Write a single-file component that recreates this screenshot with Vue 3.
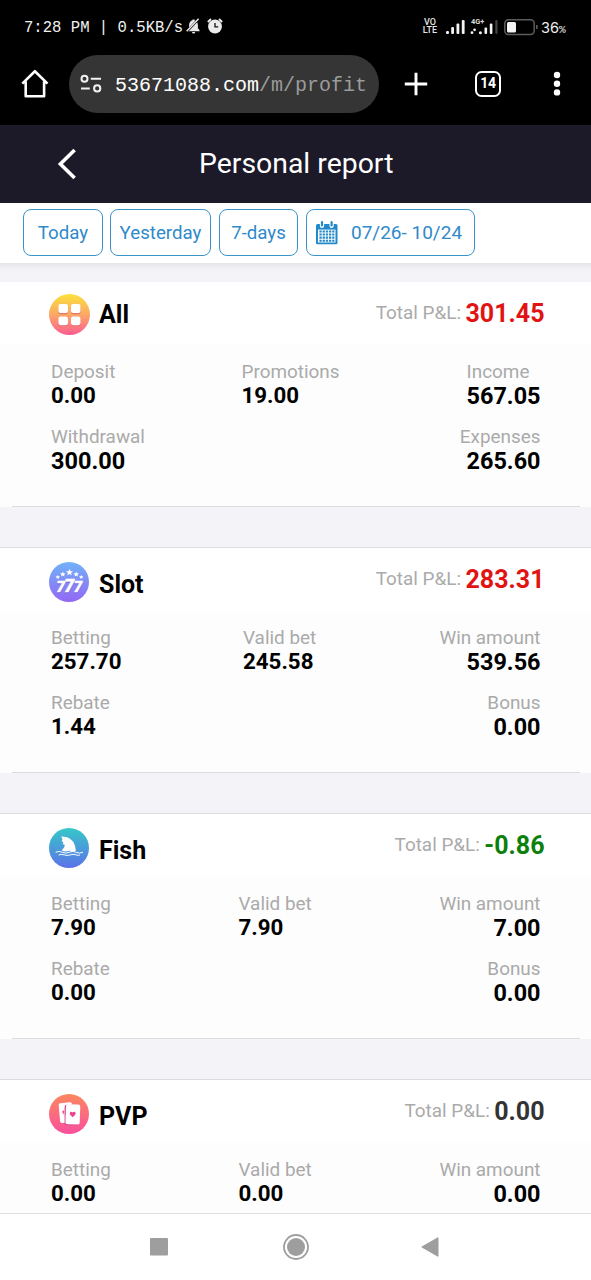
<script setup>
const sections = [
  {
    key: 'all', title: 'All', total: '301.45', tone: 'loss',
    left: [['Deposit', '0.00'], ['Withdrawal', '300.00']],
    middle: ['Promotions', '19.00'],
    right: [['Income', '567.05'], ['Expenses', '265.60']]
  },
  {
    key: 'slot', title: 'Slot', total: '283.31', tone: 'loss',
    left: [['Betting', '257.70'], ['Rebate', '1.44']],
    middle: ['Valid bet', '245.58'],
    right: [['Win amount', '539.56'], ['Bonus', '0.00']]
  },
  {
    key: 'fish', title: 'Fish', total: '-0.86', tone: 'gain',
    left: [['Betting', '7.90'], ['Rebate', '0.00']],
    middle: ['Valid bet', '7.90'],
    right: [['Win amount', '7.00'], ['Bonus', '0.00']]
  },
  {
    key: 'pvp', title: 'PVP', total: '0.00', tone: 'flat',
    left: [['Betting', '0.00']],
    middle: ['Valid bet', '0.00'],
    right: [['Win amount', '0.00']]
  }
]
const star = 'M0-3.5 1-1.1 3.5-1 1.6.6 2.2 3 0 1.7-2.2 3-1.6.6-3.5-1-1-1.1Z'
</script>

<template>
  <div class="screen">
    <div class="chrome">
      <div class="status">
        <span class="clock">7:28 PM | 0.5KB/s</span>
        <svg class="bell" width="15" height="17" viewBox="0 0 15 17">
          <path d="M1.5 13.2V12l1.6-1.7V7c0-2.5 1.4-4.3 3.4-4.8V1.4h2v.8c2 .5 3.4 2.3 3.4 4.8v3.3l1.6 1.7v1.2ZM6 14h3.2a1.6 1.6 0 0 1-3.2 0Z" fill="#e8e8e8" />
          <path d="M0 14.5 13.5 0" stroke="#000" stroke-width="2.4" />
          <path d="M.7 13.3 12.6.8" stroke="#e8e8e8" stroke-width="1.5" />
        </svg>
        <svg class="alarm" width="16" height="16" viewBox="0 0 16 16">
          <circle cx="8" cy="8.5" r="6.9" fill="#ececec" />
          <path d="M.8 4 4 1M15.2 4 12 1" stroke="#ececec" stroke-width="1.8" />
          <path d="M8 5v3.8h3.2" fill="none" stroke="#111" stroke-width="1.3" />
        </svg>
        <div class="volte"><span>VO</span><span>LTE</span></div>
        <svg class="signals" width="95" height="19" viewBox="0 0 95 19">
          <g fill="#f4f4f4">
            <rect x="0" y="13" width="3" height="3" rx="1.2" />
            <rect x="5.2" y="9" width="2.8" height="7" rx="1" />
            <rect x="10.5" y="5.5" width="2.8" height="10.5" rx="1" />
            <rect x="15.8" y="2" width="2.8" height="14" rx="1" />
            <circle cx="26" cy="14.7" r="1.4" /><circle cx="28.6" cy="11.8" r="1.4" />
            <circle cx="34.4" cy="14.7" r="1.5" />
            <rect x="38.5" y="9.4" width="2.6" height="6.6" rx="1" />
            <rect x="43.8" y="5.5" width="2.6" height="10.5" rx="1" />
            <rect x="61" y="4" width="9" height="10.5" rx="1.5" />
          </g>
          <rect x="49.3" y="2" width="2.2" height="14" rx="1" fill="#444" />
          <text x="25" y="5.8" class="net">4G+</text>
          <rect x="58.8" y="1.8" width="29.4" height="14.6" rx="3.6" fill="none" stroke="#5c5c5c" stroke-width="1.5" />
          <path d="M90.8 7v4" stroke="#5c5c5c" stroke-width="1.6" />
        </svg>
        <span class="level">36<small>%</small></span>
      </div>
      <div class="toolbar">
        <svg class="home" width="28" height="30" viewBox="0 0 28 30">
          <path d="M1.3 14.6 13.9 2.2 26.5 14.6M4.7 12.6V27.2H23.1V12.6" fill="none" stroke="#fff" stroke-width="2.6" stroke-linejoin="round" />
        </svg>
        <div class="address">
          <svg width="22" height="20" viewBox="0 0 22 20" fill="none" stroke="#f2f2f2" stroke-width="2">
            <circle cx="4.5" cy="4.7" r="3" /><path d="M10.8 4.7H21M1 14.4h8.8" /><circle cx="17.2" cy="14.4" r="3.1" />
          </svg>
          <span class="url">53671088.com<i>/m/profit</i></span>
        </div>
        <svg class="plus" width="24" height="24" viewBox="0 0 24 24"><path d="M12 .8V23.2M.8 12H23.2" stroke="#fff" stroke-width="2.9" /></svg>
        <div class="tabs">14</div>
        <svg class="more" width="8" height="26" viewBox="0 0 8 26" fill="#fff"><circle cx="4" cy="4" r="3.2" /><circle cx="4" cy="12.7" r="3.2" /><circle cx="4" cy="21.4" r="3.2" /></svg>
      </div>
    </div>

    <header class="titlebar">
      <svg width="20" height="32" viewBox="0 0 20 32"><path d="M18.6 2 4.4 16 18.6 30" fill="none" stroke="#fff" stroke-width="3.6" /></svg>
      <h1>Personal report</h1>
    </header>

    <nav class="filters">
      <button class="today">Today</button>
      <button class="yesterday">Yesterday</button>
      <button class="week">7-days</button>
      <button class="range">
        <svg width="22" height="24" viewBox="0 0 22 24">
          <path d="M0 4.5Q0 3 1.5 3H20Q21.5 3 21.5 4.5V22Q21.5 23.3 20 23.3H1.5Q0 23.3 0 22Z" fill="#2389cb" />
          <path d="M2 8.6H19.5V21.5H2Z" fill="#fff" />
          <path d="M3.4 10.5H18.4M3.4 13.5H18.4M3.4 16.6H18.4M3.4 19.7H18.4" stroke="#2389cb" stroke-width="2.1" stroke-dasharray="2.3 .9" />
          <path d="M6 1.2V5M15.6 1.2V5" stroke="#fff" stroke-width="4.2" stroke-linecap="round" />
          <path d="M6 1.2V4.4M15.6 1.2V4.4" stroke="#2389cb" stroke-width="2.2" stroke-linecap="round" />
        </svg>
        <span>07/26- 10/24</span>
      </button>
    </nav>

    <main class="report">
      <section v-for="s in sections" :key="s.key" class="record" :class="s.key">
        <div class="head">
          <svg class="badge" viewBox="0 0 40 40">
            <defs>
              <linearGradient id="g-all" x2="0" y2="1"><stop offset="0" stop-color="#fce13a" /><stop offset=".5" stop-color="#fba866" /><stop offset="1" stop-color="#fb5c91" /></linearGradient>
              <linearGradient id="g-slot" x2="0" y2="1"><stop offset="0" stop-color="#70b2f8" /><stop offset="1" stop-color="#9368f5" /></linearGradient>
              <linearGradient id="g-fish" x2="0" y2="1"><stop offset="0" stop-color="#36c8c8" /><stop offset="1" stop-color="#5c72e9" /></linearGradient>
              <linearGradient id="g-pvp" x2="0" y2="1"><stop offset="0" stop-color="#fc875f" /><stop offset="1" stop-color="#fa509e" /></linearGradient>
            </defs>
            <circle cx="20" cy="20" r="20" :fill="`url(#g-${s.key})`" />
            <template v-if="s.key === 'all'">
              <g fill="#d65f69" opacity=".65"><rect x="9.2" y="11" width="9.3" height="8.8" rx="2" /><rect x="21.4" y="11" width="9.3" height="8.8" rx="2" /><rect x="9.2" y="23" width="9.3" height="8.4" rx="2" /><rect x="21.4" y="23" width="9.3" height="8.4" rx="2" /></g>
              <g fill="#fff"><rect x="9.2" y="9.8" width="9.3" height="8.8" rx="2" /><rect x="21.4" y="9.8" width="9.3" height="8.8" rx="2" /><rect x="9.2" y="22" width="9.3" height="8.4" rx="2" /><rect x="21.4" y="22" width="9.3" height="8.4" rx="2" /></g>
            </template>
            <template v-else-if="s.key === 'slot'">
              <g fill="#fff">
                <path :d="star" transform="translate(20.5 10.3)" />
                <path :d="star" transform="translate(13.8 12.2) scale(.8)" />
                <path :d="star" transform="translate(27.2 12.2) scale(.8)" />
                <path :d="star" transform="translate(8.8 15) scale(.65)" />
                <path :d="star" transform="translate(32.2 15) scale(.65)" />
              </g>
              <g class="sevens shade"><text x="11.8" y="30.8">7</text><text x="20.2" y="31.4" class="big">7</text><text x="29" y="30.8">7</text></g>
              <g class="sevens"><text x="11.8" y="29.8">7</text><text x="29" y="29.8">7</text><text x="20.2" y="30.4" class="big">7</text></g>
            </template>
            <template v-else-if="s.key === 'fish'">
              <path d="M12.2 8.6C19.5 8.4 26.2 12 26.8 22.8Q23.6 24.4 20.3 22.7 16.2 24.5 12.6 22.3C15.1 20.3 16 18.4 15.5 16.5L13.7 16.2 14.4 14.2 12.7 13.2 13.5 11.3Z" fill="#fff" />
              <path d="M6.6 24.3Q10 22.6 13.4 24.3T20.3 24.3 27.1 24.3 34 24.2M9.7 27Q12.2 25.8 15.2 26.9T21.2 26.9 27.1 26.9 31 26.8" fill="none" stroke="#fff" stroke-width="1" />
            </template>
            <template v-else>
              <rect x="10.3" y="8.8" width="13.3" height="19.8" rx="1.8" fill="#fff" transform="rotate(-5 16.5 18)" />
              <path d="M15.2 16.5v4q-2-1.2-2-2.8t2-1.2Z" fill="#f4539d" />
              <rect x="15.6" y="10.8" width="14.8" height="20.5" rx="2.2" fill="#d8418b" />
              <rect x="16.7" y="10.4" width="14.3" height="20" rx="2" fill="#fff" transform="rotate(2 24 20)" />
              <path d="M23.7 23.2C18.2 19.4 21.7 16.4 23.7 18.6 25.7 16.4 29.2 19.4 23.7 23.2Z" fill="#ed438f" />
            </template>
          </svg>
          <h2>{{ s.title }}</h2>
          <div class="total"><span>Total P&amp;L:</span><b :class="s.tone">{{ s.total }}</b></div>
        </div>
        <div class="body">
          <div class="col">
            <div v-for="(c, i) in s.left" :key="i" class="cell"><span>{{ c[0] }}</span><b :class="{ wide: i === 1 && s.key === 'all' }">{{ c[1] }}</b></div>
          </div>
          <div class="col mid">
            <div class="cell"><span>{{ s.middle[0] }}</span><b>{{ s.middle[1] }}</b></div>
          </div>
          <div class="col end">
            <div v-for="(c, i) in s.right" :key="i" class="cell" :class="{ income: c[0] === 'Income' }"><span>{{ c[0] }}</span><b>{{ c[1] }}</b></div>
          </div>
        </div>
      </section>
    </main>

    <footer class="keys">
      <svg width="18" height="18" viewBox="0 0 18 18"><rect width="18" height="17.5" rx="1" fill="#9e9e9e" /></svg>
      <svg width="28" height="28" viewBox="0 0 28 28"><circle cx="14" cy="14" r="12" fill="none" stroke="#9e9e9e" stroke-width="1.8" /><circle cx="14" cy="14" r="9" fill="#9e9e9e" /></svg>
      <svg width="18" height="20" viewBox="0 0 18 20"><path d="M.8 10 17 .7V19.3Z" fill="#9e9e9e" stroke="#9e9e9e" stroke-linejoin="round" /></svg>
    </footer>
  </div>
</template>

<style>
body { margin: 0; background: #fff; }
</style>

<style scoped>
.screen { width: 591px; height: 1280px; overflow: hidden; display: flex; flex-direction: column; background: #f4f3f8; font-family: Roboto, "Liberation Sans", sans-serif; }
.screen * { box-sizing: border-box; }
svg { display: block; flex: none; }
.chrome { height: 125px; flex: none; background: #000; color: #fff; }
.status { height: 55px; display: flex; align-items: center; padding-left: 24px; }
.clock { width: 161px; flex: none; font: 15.6px/20px "Liberation Mono", monospace; color: #f0f0f0; white-space: pre; }
.bell { margin: -3px 0 0 1px; }
.alarm { margin: -3px 0 0 6px; }
.volte { width: 16px; flex: none; margin: -3px 8px 0 199px; display: flex; flex-direction: column; align-items: center; font-size: 9px; font-weight: 500; line-height: 8.4px; color: #e6e6e6; }
.signals { margin-top: -1px; }
.net { font: 700 7.4px Roboto, sans-serif; fill: #ddd; }
.level { font-family: Inter, sans-serif; font-size: 14.5px; color: #eee; white-space: nowrap; }
.level small { font: 11px "Liberation Mono", monospace; }
.toolbar { height: 58px; display: flex; align-items: center; padding-left: 21px; }
.home { margin-right: 20px; }
.address { width: 310px; height: 58px; border-radius: 29px; background: #353535; display: flex; align-items: center; padding-left: 11px; }
.url { margin: 3px 0 0 13px; font: 20px/24px "Liberation Mono", monospace; white-space: nowrap; }
.url i { font-style: normal; color: #9b9b9b; }
.plus { margin-left: 25px; }
.tabs { width: 26px; height: 26px; margin-left: 47px; border: 2.5px solid #fff; border-radius: 6.5px; text-align: center; font-size: 14px; font-weight: 700; line-height: 21px; letter-spacing: -0.3px; }
.more { margin-left: 52px; }
.titlebar { height: 78px; flex: none; background: #1c1a28; display: flex; align-items: center; padding-left: 56px; color: #fff; }
.titlebar svg { margin-top: -1px; }
h1 { margin: 0 0 0 123px; font-size: 28.4px; font-weight: 400; line-height: 40px; white-space: nowrap; }
.filters { height: 60px; flex: none; background: #fff; display: flex; padding: 6px 0 0 23px; }
button { height: 47px; padding: 0; border: 1px solid #3a94cb; border-radius: 8px; background: #fff; color: #2f8ac9; font: 18.7px/46px Roboto, sans-serif; white-space: nowrap; text-align: center; }
.today { width: 80px; }
.yesterday { width: 101px; margin-left: 7px; }
.week { width: 79px; margin-left: 8px; }
.range { width: 169px; margin-left: 8px; display: flex; align-items: center; padding-left: 9px; font-size: 19px; line-height: 45px; }
.range span { margin-left: 13px; }
.report { flex: 1; min-height: 0; overflow: hidden; padding-top: 19px; background: linear-gradient(#e6e6ea, #f4f3f8 7px); }
.record { margin-bottom: 40px; }
.head { height: 64px; background: #fff; border-top: 1px solid #dcdce0; display: flex; align-items: flex-start; padding: 0 46.5px 0 49px; }
.badge { width: 40px; height: 40px; margin-top: 14px; overflow: visible; }
h2 { margin: 22px 0 0 10px; font-size: 25px; font-weight: 700; line-height: 30px; color: #000; }
.total { margin: 17px 0 0 auto; display: flex; font-size: 18.9px; color: #aaa; white-space: nowrap; }
.total span { line-height: 28px; margin-right: 4.5px; }
.total b { font-size: 25px; line-height: 30px; }
.loss { color: #e11313; }
.gain { color: #0b800b; }
.flat { color: #333; }
.all .head { height: 62px; border-top: 0; }
.all .badge { width: 41px; height: 41px; margin-top: 12px; }
.all h2 { margin: 18px 0 0 9px; }
.all .total { margin-top: 17px; }
.body { height: 162px; background: #fdfdfd; padding: 15px 50.5px 0 51px; display: flex; position: relative; }
.all .body { height: 163px; padding-top: 16px; }
.pvp .body { height: 70px; }
.body::after { content: ""; position: absolute; left: 12px; right: 11px; bottom: 0; height: 1px; background: #dcdcdf; }
.pvp .body::after { display: none; }
.col { width: 190.5px; display: flex; flex-direction: column; gap: 16px; }
.slot .col:first-child { width: 192px; }
.fish .col:first-child, .pvp .col:first-child { width: 187.5px; }
.cell { display: flex; flex-direction: column; height: 49px; }
.cell span { font-size: 18.9px; line-height: 24px; color: #aaa; white-space: nowrap; }
.cell b { font-size: 22.3px; line-height: 23px; color: #000; }
.cell .wide { font-size: 23.5px; line-height: 25px; }
.end { width: auto; margin-left: auto; align-items: flex-end; }
.end .cell { align-items: flex-end; }
.end .income { align-items: flex-start; }
.end .cell span { line-height: 23.5px; }
.end .cell b { font-size: 23.4px; line-height: 25px; }
.all .end .cell b { line-height: 24.5px; }
.sevens { font: italic 900 15px Roboto, sans-serif; fill: #fff; stroke: #fff; stroke-width: .5; text-anchor: middle; }
.big { font-size: 17.5px; }
.shade { fill: #7659c8; stroke: #7659c8; }
.keys { height: 67px; flex: none; background: #fff; border-top: 1.5px solid #dedede; display: flex; align-items: center; padding-left: 150px; }
.keys svg:nth-child(2) { margin-left: 114px; }
.keys svg:nth-child(3) { margin-left: 111px; }
</style>
